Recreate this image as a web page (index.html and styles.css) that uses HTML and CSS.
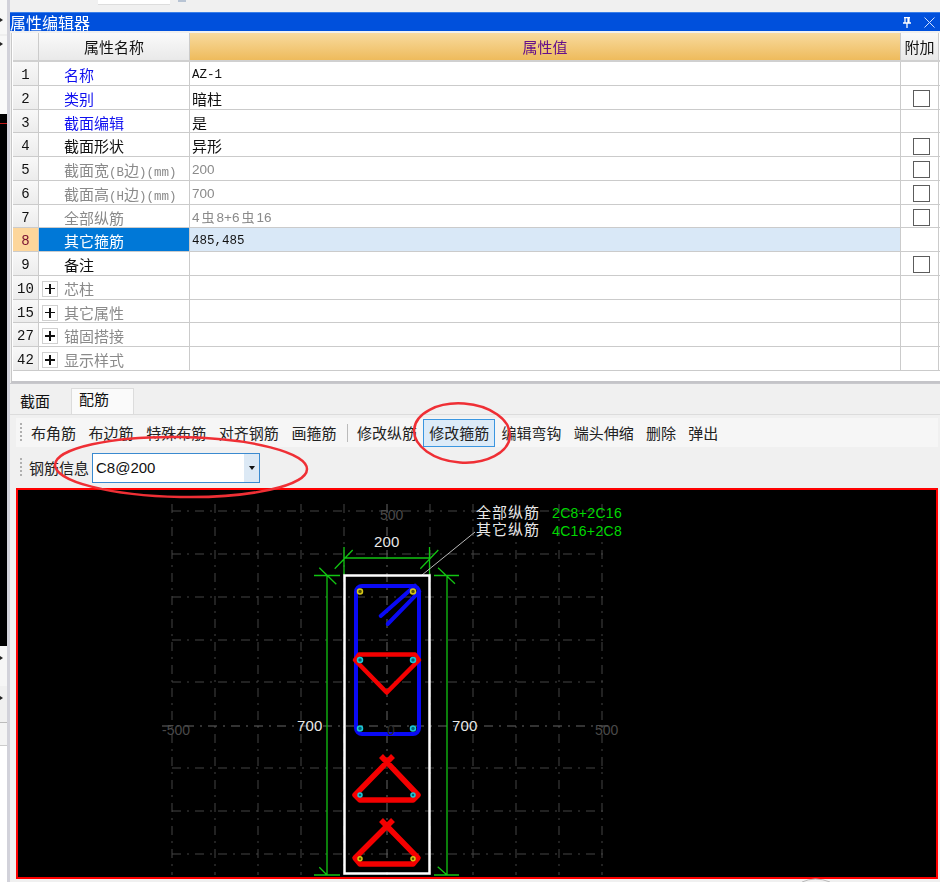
FILE: index.html
```html
<!DOCTYPE html>
<html lang="zh-CN">
<head>
<meta charset="utf-8">
<title>属性编辑器</title>
<link rel="stylesheet" href="styles.css">
</head>
<body>
<div class="page">
  <aside class="side">
    <div class="side-a"><i class="arrow"></i></div>
    <div class="side-b"><i class="arrow"></i></div>
    <div class="side-c"></div>
    <div class="side-black"><i class="side-red"></i></div>
    <div class="side-d"><i class="arrow"></i></div>
    <div class="side-e"><i class="arrow"></i></div>
    <div class="side-f"></div>
    <div class="side-g"></div>
  </aside>
  <main class="main">
    <div class="topstrip"><span class="top-input"></span><span class="top-bit"></span></div>
    <header class="titlebar">
      <span class="title">属性编辑器</span>
      <span class="title-icons">
        <svg class="ico" viewBox="0 0 10 11" width="10" height="11"><path d="M2 .5h6M3 .5v5.500M7 .5v5.500M1 6h8M5 6v5M6 .5v5.500" stroke="#fff" stroke-width="1.300" fill="none"/></svg>
        <svg class="ico" viewBox="0 0 11 11" width="11" height="11"><path d="M.5 .5l10 10M10.500 .5l-10 10" stroke="#cfe0ff" stroke-width="1" fill="none"/></svg>
      </span>
    </header>
    <section class="props">
      <div class="row head">
        <div class="c-num"></div>
        <div class="c-name h-name">属性名称</div>
        <div class="c-val h-val">属性值</div>
        <div class="c-ext h-ext">附加</div>
      </div>
      <div class="row"><div class="c-num">1</div><div class="c-name blue">名称</div><div class="c-val mono">AZ-1</div><div class="c-ext"></div></div>
      <div class="row"><div class="c-num">2</div><div class="c-name blue">类别</div><div class="c-val">暗柱</div><div class="c-ext"><i class="check"></i></div></div>
      <div class="row"><div class="c-num">3</div><div class="c-name blue">截面编辑</div><div class="c-val">是</div><div class="c-ext"></div></div>
      <div class="row"><div class="c-num">4</div><div class="c-name">截面形状</div><div class="c-val">异形</div><div class="c-ext"><i class="check"></i></div></div>
      <div class="row"><div class="c-num">5</div><div class="c-name gray">截面宽<span class="latin">(B</span>边<span class="latin">)(mm)</span></div><div class="c-val small gray">200</div><div class="c-ext"><i class="check"></i></div></div>
      <div class="row"><div class="c-num">6</div><div class="c-name gray">截面高<span class="latin">(H</span>边<span class="latin">)(mm)</span></div><div class="c-val small gray">700</div><div class="c-ext"><i class="check"></i></div></div>
      <div class="row"><div class="c-num">7</div><div class="c-name gray">全部纵筋</div><div class="c-val small gray">4<span class="rb">虫</span>8+6<span class="rb">虫</span>16</div><div class="c-ext"><i class="check"></i></div></div>
      <div class="row selected"><div class="c-num">8</div><div class="c-name">其它箍筋</div><div class="c-val mono">485,485</div><div class="c-ext"></div></div>
      <div class="row"><div class="c-num">9</div><div class="c-name">备注</div><div class="c-val"></div><div class="c-ext"><i class="check"></i></div></div>
      <div class="row"><div class="c-num">10</div><div class="c-name gray"><i class="plus"></i>芯柱</div><div class="c-val"></div><div class="c-ext"></div></div>
      <div class="row"><div class="c-num">15</div><div class="c-name gray"><i class="plus"></i>其它属性</div><div class="c-val"></div><div class="c-ext"></div></div>
      <div class="row"><div class="c-num">27</div><div class="c-name gray"><i class="plus"></i>锚固搭接</div><div class="c-val"></div><div class="c-ext"></div></div>
      <div class="row"><div class="c-num">42</div><div class="c-name gray"><i class="plus"></i>显示样式</div><div class="c-val"></div><div class="c-ext"></div></div>
    </section>
    <nav class="tabs">
      <span class="tab">截面</span>
      <span class="tab active">配筋</span>
    </nav>
    <section class="content">
      <div class="toolbar">
        <i class="grip"></i>
        <span class="tool">布角筋</span>
        <span class="tool">布边筋</span>
        <span class="tool">特殊布筋</span>
        <span class="tool">对齐钢筋</span>
        <span class="tool">画箍筋</span>
        <i class="sep"></i>
        <span class="tool">修改纵筋</span>
        <span class="tool on">修改箍筋</span>
        <span class="tool">编辑弯钩</span>
        <span class="tool">端头伸缩</span>
        <span class="tool">删除</span>
        <span class="tool">弹出</span>
      </div>
      <div class="toolbar second">
        <i class="grip"></i>
        <span class="lbl">钢筋信息</span>
        <div class="select"><span class="select-text">C8@200</span><span class="select-btn"><i class="caret"></i></span></div>
      </div>
      <div class="canvas">
        <svg class="draw" viewBox="18 490 918 387" width="918" height="387">
          <g class="grid">
            <path d="M172 504V875M215 504V875M258 504V875M301 504V875M344 504V875M430 504V875M473 504V875M516 504V875M559 504V875M602 504V875"/>
            <path d="M172 511H609M172 554H609M172 597H609M172 640H609M172 682H609M172 768H609M172 811H609M172 854H609"/>
            <path class="axis" d="M387 504V875M162 726H609"/>
          </g>
          <g class="dim">
            <path d="M344 547V575M429.500 547V575M344 558H429.500M334.700 568.700L352.700 550M420.300 568.700L438.300 550"/>
            <path d="M327 575.500V875M314 575.500H340M314 875H340M319.300 567.700L336.300 584.300M319.300 867.300L327 875"/>
            <path d="M447 575.500V875M434 575.500H459M434 875H459M438 567.700L455 583.700M437.700 866.700L447 875"/>
          </g>
          <path class="leader" d="M422 575L475 532"/>
          <rect class="outline" x="344.500" y="575.500" width="85" height="298"/>
          <g class="blue-bar">
            <rect x="356" y="586" width="63" height="148" rx="6"/>
            <path d="M380.700 616L415 585.700M387.700 624L419.300 591.700"/>
          </g>
          <g class="red-bar">
            <path d="M355 660L359 654.500H415L419 660L386.700 692.500Z"/>
            <path class="tri" d="M381 756L418 795L413 800H360L355 795L393 756"/>
            <path class="tri" d="M381 820L418 858L413 864H360L355 858L393 820"/>
          </g>
          <g class="dot-c">
            <circle cx="360" cy="660" r="2.500"/><circle cx="413" cy="660" r="2.500"/>
            <circle cx="360" cy="728.500" r="2.500"/><circle cx="413" cy="728.500" r="2.500"/>
            <circle cx="360" cy="795" r="2"/><circle cx="413" cy="795" r="2"/>
          </g>
          <g class="dot-y">
            <circle cx="360" cy="591.500" r="2.500"/><circle cx="413" cy="591.500" r="2.500"/>
            <circle cx="360" cy="858.700" r="2"/><circle cx="413" cy="858.700" r="2"/>
          </g>
          <text class="t-dim" x="374" y="547">200</text>
          <text class="t-dim" x="297" y="731">700</text>
          <text class="t-dim" x="452" y="731">700</text>
          <text class="t-axis" x="380" y="520">500</text>
          <text class="t-axis" x="162" y="735">-500</text>
          <text class="t-axis" x="595" y="735">500</text>
          <text class="t-axis zero" x="387" y="735">0</text>
          <text class="t-cn" x="476" y="518">全部纵筋</text>
          <text class="t-cn" x="476" y="535">其它纵筋</text>
          <text class="t-green" x="552" y="518">2C8+2C16</text>
          <text class="t-green" x="552" y="536">4C16+2C8</text>
        </svg>
      </div>
    </section>
  </main>
  <svg class="marks" viewBox="0 0 940 882" width="940" height="882">
    <ellipse cx="462" cy="433" rx="48" ry="29.500" transform="rotate(4 462 433)"/>
    <ellipse cx="181" cy="467" rx="126" ry="30" transform="rotate(1 181 467)"/>
    <path class="arc" d="M802 882Q815 876 830 882"/>
  </svg>
</div>
</body>
</html>
```
FILE: styles.css
```css
* { box-sizing: border-box; }
html, body { margin: 0; padding: 0; }
body { background: #f0f0f0; overflow: hidden; }
.page {
  position: relative;
  display: flex;
  width: 940px;
  height: 882px;
  overflow: hidden;
  font-family: "Noto Sans CJK SC", "Liberation Sans", sans-serif;
  font-size: 15px;
  color: #111;
  filter: blur(.3px);
}

/* left sliver of the window behind */
.side { flex: 0 0 10px; display: flex; flex-direction: column; background: #eee; border-right: 3px solid #d2d2da; }
.arrow { display: block; width: 0; height: 0; border: 2px solid transparent; border-left: 3px solid #222; border-right: 0; }
.side-a { height: 34px; padding-top: 18px; background: #f7f7f7; }
.side-b { height: 44px; padding-top: 6px; margin-top: 2px; background: #f7f7f7; }
.side-c { height: 34px; background: #fafafa; }
.side-black { height: 532px; background: #000; }
.side-red { display: block; height: 1px; margin-top: 9px; background: #c01818; }
.side-d { height: 40px; padding-top: 10px; background: #f6f6f6; }
.side-e { height: 36px; padding-top: 10px; background: #f0f0f0; }
.side-f { height: 24px; background: #f4f4f4; border-top: 1px solid #bbb; border-bottom: 1px solid #ccc; }
.side-g { flex: 1; background: #fff; }

.main { flex: 1; min-width: 0; display: flex; flex-direction: column; }
.topstrip { height: 12px; display: flex; align-items: flex-start; background: #f0f0f0; }
.top-input { width: 72px; height: 5px; margin-left: 88px; background: #fff; border-bottom: 1px solid #ddd; }
.top-bit { width: 8px; height: 2px; margin-left: 8px; background: #b8c4d4; }

.titlebar {
  height: 19px;
  display: flex;
  align-items: center;
  justify-content: space-between;
  padding-right: 5px;
  background: #0050dc;
  border-top: 1px solid #3a7fe8;
  color: #fff;
}
.title { font-size: 16px; line-height: 18px; }
.title-icons { display: flex; gap: 12px; align-items: center; }
.ico { display: block; }

.props {
  height: 350px;
  margin: 2px 0 0 1px;
  padding-left: 1px;
  background: #fff;
  border-left: 1px solid #c8c8c8;
  border-bottom: 2px solid #c4c4c8;
}
.row {
  display: grid;
  grid-template-columns: 26px 151px 711px 38px;
  height: 23.75px;
  line-height: 20px;
  border-bottom: 1.500px solid #cbcbcb;
}
.row > div { padding-top: 3px; border-right: 1.500px solid #cbcbcb; white-space: nowrap; overflow: hidden; }
.row.head { height: 29px; line-height: 27px; border-bottom: 2px solid #d0d0d0; }
.row.head > div { padding-top: 0; }
.c-num {
  text-align: center;
  font-family: "Liberation Mono", monospace;
  font-size: 14px;
  background: linear-gradient(#f8f8f8, #ececec);
}
.c-name { padding-left: 25px; }
.c-val { padding-left: 2px; }
.c-ext { display: flex; align-items: center; justify-content: center; }
.h-name { padding-left: 0; text-align: center; background: linear-gradient(#fafafa, #e9e9e9); }
.h-val { padding-left: 0; text-align: center; color: #66108a; background: linear-gradient(#f8da9e, #eebb5c); }
.h-ext { background: linear-gradient(#fafafa, #e9e9e9); }
.blue { color: #1010f0; }
.gray { color: #8a8a8a; }
.latin { font-family: "Liberation Mono", monospace; font-size: 12.500px; }
.mono { font-family: "Liberation Mono", monospace; font-size: 12.500px; }
.small { font-size: 13.500px; font-family: "Liberation Sans", "Noto Sans CJK SC", sans-serif; }
.rb { margin: 0 2px; font-size: 13px; }
.check { display: block; width: 17px; height: 17px; margin-left: 3px; border: 1.500px solid #5c5c5c; background: #fff; }
.plus {
  position: relative;
  float: left;
  width: 16px;
  height: 16px;
  margin: 2px 6px 0 -22px;
  background: #fff;
  border: 1px solid #d0d0d0;
}
.plus::before { content: ""; position: absolute; left: 2px; right: 2px; top: 6px; height: 1.500px; background: #111; }
.plus::after { content: ""; position: absolute; top: 2px; bottom: 2px; left: 6px; width: 1.500px; background: #111; }
.selected .c-num { background: #fdd69b; color: #7a1030; }
.selected .c-name { background: #0078d7; color: #fff; }
.selected .c-val { background: #d9e8f7; }

.tabs { height: 31px; display: flex; align-items: flex-end; padding-left: 3px; background: #f0f0f0; border-top: 1px solid #c8c8cc; }
.tab { width: 58px; height: 24px; line-height: 22px; padding-left: 7px; }
.tab.active { width: 63px; height: 26px; padding-left: 7px; background: #fafafa; border: 1px solid #dcdcdc; border-bottom: 0; line-height: 20px; }

.content { flex: 1; min-height: 0; padding: 3px 2px 3px 6px; background: #f0f0f0; border-top: 1px solid #dcdcdc; }
.toolbar { display: flex; align-items: center; height: 29px; padding-left: 4px; background: #f6f6f6; }
.second { height: 37px; margin-top: 4px; align-items: flex-start; padding-top: 2px; background: #f0f0f0; }
.grip { flex: 0 0 2px; height: 20px; margin-right: 3px; background: repeating-linear-gradient(#b0b0b0 0 2px, transparent 2px 4px); }
.second .grip { margin-top: 5px; margin-right: 4px; }
.tool { padding: 0 6.300px; line-height: 26px; white-space: nowrap; color: #222; }
.tool:first-of-type { padding-left: 6px; }
.tool.on { height: 28px; padding: 0 5px; background: #dcebf8; border: 1px solid #3a96e0; }
.tool.on + .tool { padding-left: 6px; }
.tool.on ~ .tool { padding-right: 6px; }
.sep { flex: 0 0 1px; height: 18px; margin: 0 3px 0 4px; background: #bbb; }
.lbl { margin-left: 3px; line-height: 30px; color: #222; }
.select { display: flex; justify-content: space-between; width: 168px; height: 30px; margin-left: 3px; background: #fff; border: 1px solid #3a8ad0; }
.select-text { padding-left: 3px; font-family: "Liberation Sans", sans-serif; line-height: 27px; }
.select-btn { display: flex; align-items: center; justify-content: center; width: 15px; background: #dce9f5; }
.caret { width: 0; height: 0; border: 3.500px solid transparent; border-top: 4px solid #111; border-bottom: 0; }

.canvas { width: 922px; height: 391px; border: 2px solid #f00; background: #000; }
.draw { display: block; font-family: "Liberation Sans", sans-serif; }
.grid path { fill: none; stroke: #444; stroke-width: 1; stroke-dasharray: 9 6 2 6; }
.grid .axis { stroke: #666; }
.dim path { fill: none; stroke: #12c412; stroke-width: 1.300; }
.leader { stroke: #b8b8b8; stroke-width: 1; }
.outline { fill: none; stroke: #fff; stroke-width: 2.500; }
.blue-bar rect, .blue-bar path { fill: none; stroke: #0a0af5; stroke-width: 4; stroke-linecap: round; }
.red-bar path { fill: none; stroke: #f40000; stroke-width: 4.500; stroke-linejoin: round; }
.red-bar .tri { stroke-width: 5.500; }
.dot-c circle { fill: #067; stroke: #1cc8d8; stroke-width: 1.500; }
.dot-y circle { fill: #550; stroke: #d8c818; stroke-width: 1.500; }
.t-dim { font-size: 15px; fill: #e8e8e8; letter-spacing: .2px; }
.t-axis { font-size: 14px; fill: #4a4a4a; }
.zero { fill: #2c2c2c; }
.t-cn { font-family: "Noto Sans CJK SC", sans-serif; font-size: 15px; letter-spacing: 1px; fill: #e8e8e8; }
.t-green { font-size: 14px; letter-spacing: .35px; fill: #00d800; }

.marks { position: absolute; left: 0; top: 0; pointer-events: none; }
.marks ellipse { fill: none; stroke: #ef2f35; stroke-width: 2.500; }
.marks .arc { fill: none; stroke: #bbb; stroke-width: 1; }
```
